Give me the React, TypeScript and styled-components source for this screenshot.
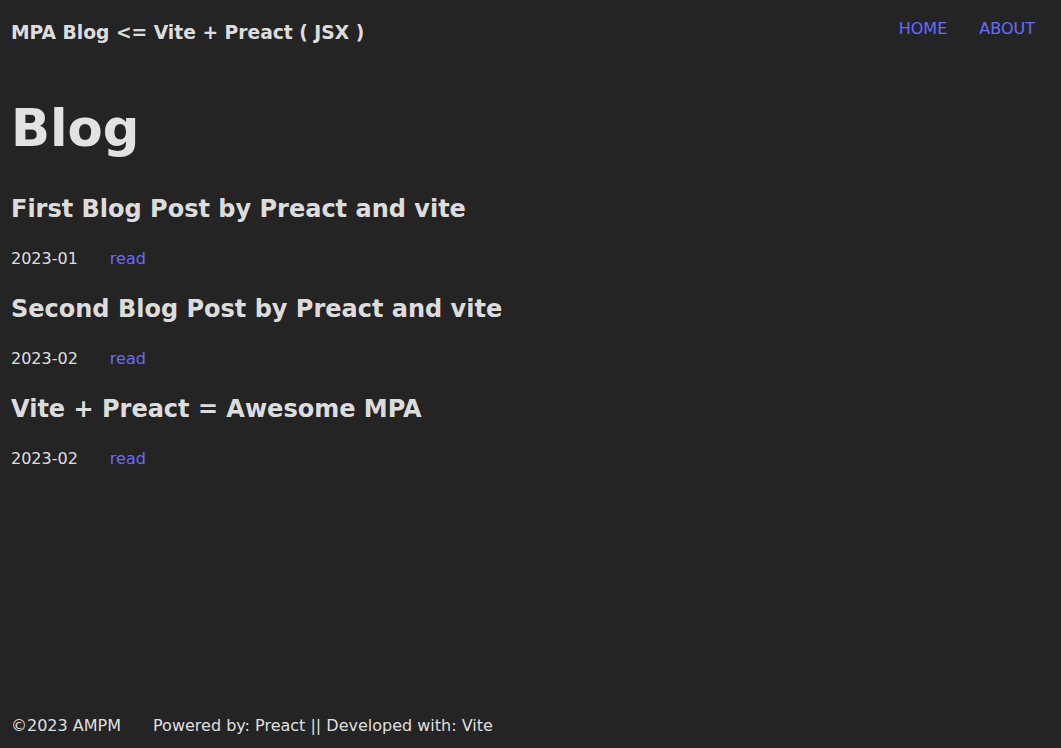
import React from "react";
import styled, { createGlobalStyle } from "styled-components";

const GlobalStyle = createGlobalStyle`
  html, body {
    margin: 0;
    padding: 0;
    background: #242424;
  }
  body {
    font-family: "DejaVu Sans", Verdana, sans-serif;
    font-size: 16px;
    line-height: 1.5;
    color: rgba(255, 255, 255, 0.87);
    -webkit-font-smoothing: antialiased;
  }
`;

const Page = styled.div`
  min-height: 100vh;
  display: flex;
  flex-direction: column;
  padding: 0 11px;
  box-sizing: border-box;
`;

const Header = styled.header`
  display: flex;
  justify-content: space-between;
  align-items: flex-start;
  height: 66px;
  padding-right: 15px;
`;

const SiteTitle = styled.div`
  font-size: 18.7px;
  font-weight: bold;
  line-height: 27px;
  padding-top: 19px;
`;

const Nav = styled.nav`
  display: flex;
  gap: 32px;
  padding-top: 17px;
`;

const NavLink = styled.a`
  color: #646cff;
  text-decoration: none;
  font-weight: 500;
`;

const Main = styled.main`
  flex: 1;
`;

const PageTitle = styled.h1`
  font-size: 3.2em;
  line-height: 1.1;
  margin: 34px 0 0.67em;
`;

const PostTitle = styled.h2`
  font-size: 1.5em;
  line-height: 1.5;
  margin: 20px 0;
`;

const PostMeta = styled.p`
  display: flex;
  gap: 32px;
  margin: 1em 0;
`;

const ReadLink = styled.a`
  color: #646cff;
  text-decoration: none;
`;

const Footer = styled.footer`
  display: flex;
  gap: 32px;
  padding-bottom: 10px;
`;

const posts = [
  { title: "First Blog Post by Preact and vite", date: "2023-01" },
  { title: "Second Blog Post by Preact and vite", date: "2023-02" },
  { title: "Vite + Preact = Awesome MPA", date: "2023-02" },
];

export default function App() {
  return (
    <>
      <GlobalStyle />
      <Page>
        <Header>
          <SiteTitle>MPA Blog &lt;= Vite + Preact ( JSX )</SiteTitle>
          <Nav>
            <NavLink href="#">HOME</NavLink>
            <NavLink href="#">ABOUT</NavLink>
          </Nav>
        </Header>
        <Main>
          <PageTitle>Blog</PageTitle>
          {posts.map((p) => (
            <section key={p.title}>
              <PostTitle>{p.title}</PostTitle>
              <PostMeta>
                <span>{p.date}</span>
                <ReadLink href="#">read</ReadLink>
              </PostMeta>
            </section>
          ))}
        </Main>
        <Footer>
          <span>©2023 AMPM</span>
          <span>Powered by: Preact || Developed with: Vite</span>
        </Footer>
      </Page>
    </>
  );
}
